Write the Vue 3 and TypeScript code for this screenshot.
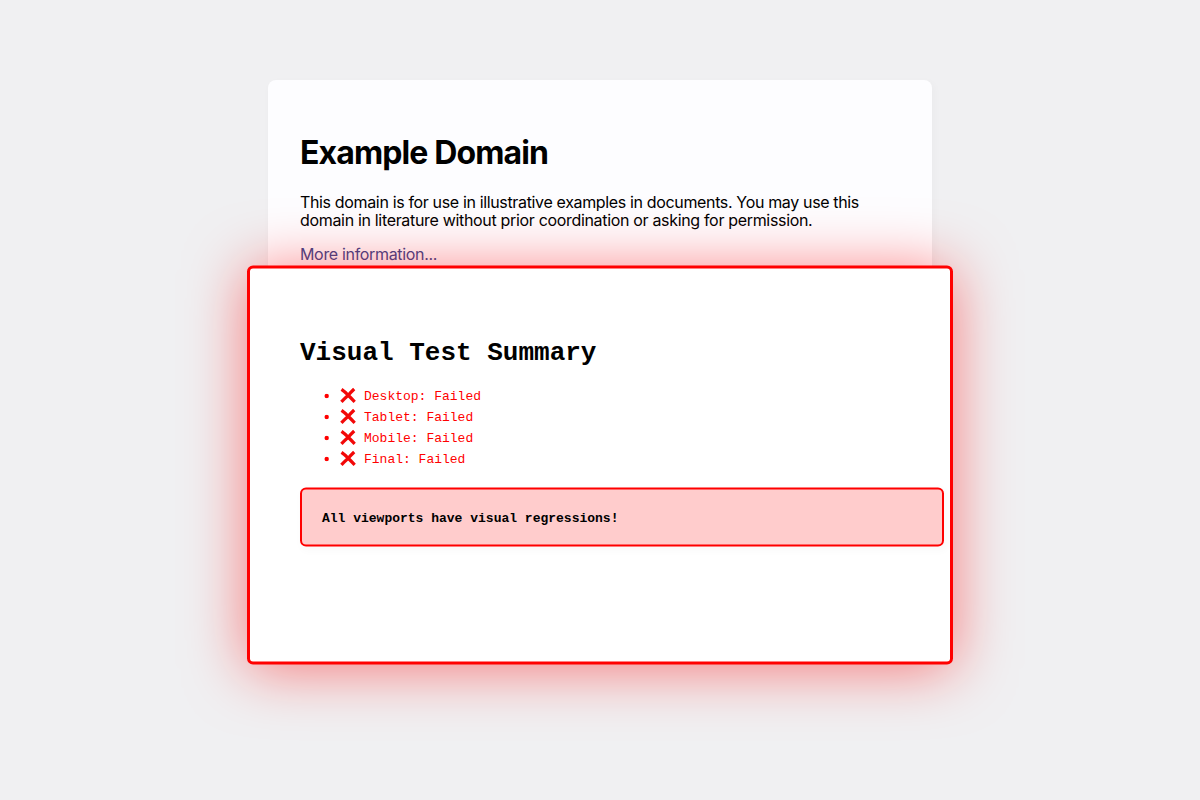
<script setup lang="ts">
interface ViewportResult {
  name: string
  status: string
}

const results: ViewportResult[] = [
  { name: 'Desktop', status: 'Failed' },
  { name: 'Tablet', status: 'Failed' },
  { name: 'Mobile', status: 'Failed' },
  { name: 'Final', status: 'Failed' },
]
</script>

<template>
  <main class="page">
    <section class="card">
      <h1>Example Domain</h1>
      <p>
        <span>This domain is for use in illustrative examples in documents. You may use this</span><br />
        <span class="second">domain in literature without prior coordination or asking for permission.</span>
      </p>
      <p><a class="more">More information...</a></p>
    </section>
    <section class="summary">
      <h2>Visual Test Summary</h2>
      <ul>
        <li v-for="r in results" :key="r.name">
          <svg class="dot" viewBox="0 0 5 5" aria-hidden="true"><circle cx="2.7" cy="2.5" r="2.2" /></svg>
          <svg class="cross" viewBox="0 0 16 16" aria-hidden="true">
            <path d="M1.5 1.8 Q5.2 4.3 8 7.5 Q11 10.5 14.7 14.3 M14.2 1.5 Q10 5.5 8 8 Q4.5 11 1.4 14.4" />
          </svg>
          <span>{{ r.name }}: {{ r.status }}</span>
        </li>
      </ul>
      <div class="notice">All viewports have visual regressions!</div>
    </section>
  </main>
</template>

<style>
body {
  margin: 0;
  background: #f0f0f2;
}
</style>

<style scoped>
.page {
  position: relative;
  box-sizing: border-box;
  height: 800px;
  padding-top: 80px;
  overflow: hidden;
  background: #f0f0f2;
  color: #000;
  font-family: Inter, 'Liberation Sans', sans-serif;
  font-size: 16px;
  line-height: 18px;
}
.card {
  box-sizing: border-box;
  width: 664px;
  height: 240px;
  margin: 0 auto;
  padding: 54px 32px 32px;
  background: #fdfdff;
  border-radius: 8px;
  box-shadow: 2px 3px 7px 2px rgba(0, 0, 0, 0.02);
  white-space: nowrap;
}
h1 {
  margin: 0 0 21px;
  font-size: 32px;
  line-height: 38px;
  font-weight: 700;
  letter-spacing: -0.87px;
}
p {
  margin: 0 0 16px;
  letter-spacing: -0.35px;
}
.second {
  letter-spacing: -0.325px;
}
.more {
  color: #38488f;
  letter-spacing: -0.33px;
}
.summary {
  position: absolute;
  left: 247px;
  top: 265px;
  box-sizing: border-box;
  width: 706px;
  height: 399px;
  padding: 69px 0 0 50px;
  transform: translateY(0.5px);
  background: #fff;
  border: 3px solid #f00;
  border-radius: 6px;
  box-shadow: 0 4px 60px rgba(255, 0, 0, 0.5);
  font-family: 'Courier New', 'Liberation Mono', monospace;
  font-size: 13px;
}
h2 {
  margin: 0;
  font-size: 26px;
  line-height: 30px;
  font-weight: 700;
}
ul {
  margin: 18px 0;
  padding: 0;
  list-style: none;
  color: #f00;
}
li {
  display: flex;
  align-items: center;
  height: 21px;
  padding-left: 24px;
}
.dot {
  width: 5px;
  height: 5px;
  margin: 0 11px 1px 0;
  fill: #f00;
}
.cross {
  width: 16px;
  height: 16px;
  margin: 0 8px 2px 0;
  fill: none;
  stroke: #f20808;
  stroke-width: 3.2;
}
.notice {
  box-sizing: border-box;
  width: 644px;
  height: 59px;
  padding: 20px;
  background: #fcc;
  border: 2px solid #f00;
  border-radius: 6px;
  box-shadow: 2px 3px 7px 2px rgba(0, 0, 0, 0.02);
  font-weight: 700;
  line-height: 17px;
}
</style>
